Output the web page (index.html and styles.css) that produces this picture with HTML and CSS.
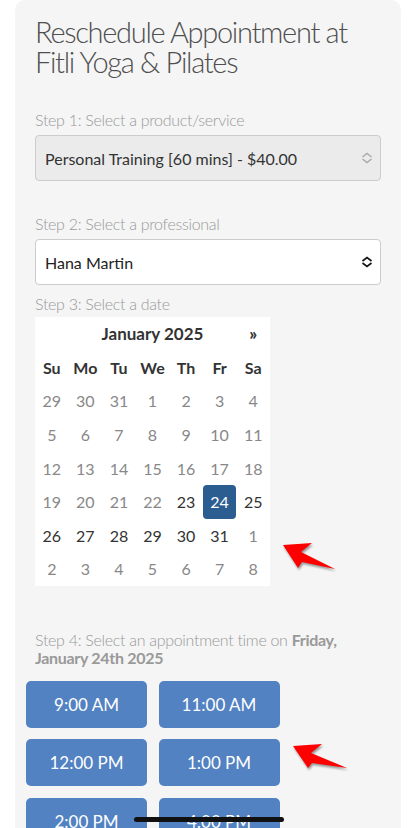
FILE: index.html
```html
<!DOCTYPE html>
<html lang="en">
<head>
    <meta charset="UTF-8">
    <meta name="viewport" content="width=device-width, initial-scale=1.0">
    <title>Reschedule Appointment - Fitli Yoga &amp; Pilates</title>
    <link rel="stylesheet" href="styles.css">
</head>
<body>
    <div class="page">
        <main class="card">
            <h1>Reschedule Appointment at Fitli Yoga &amp; Pilates</h1>

            <section class="step step-service">
                <label for="service">Step 1: Select a product/service</label>
                <div class="select disabled">
                    <span id="service">Personal Training [60 mins] - $40.00</span>
                    <svg class="chevrons" width="12" height="12" viewBox="0 0 12 12"><path d="M1.5 5 L6 1.5 L10.5 5 M1.5 7 L6 10.5 L10.5 7" fill="none" stroke="currentColor" stroke-width="1.4"/></svg>
                </div>
            </section>

            <section class="step step-pro">
                <label for="professional">Step 2: Select a professional</label>
                <div class="select">
                    <span id="professional">Hana Martin</span>
                    <svg class="chevrons" width="12" height="12" viewBox="0 0 12 12"><path d="M1.5 5 L6 1.5 L10.5 5 M1.5 7 L6 10.5 L10.5 7" fill="none" stroke="currentColor" stroke-width="1.6"/></svg>
                </div>
            </section>

            <section class="step">
                <label>Step 3: Select a date</label>
                <div class="calendar">
                    <span></span>
                    <span class="month">January 2025</span>
                    <span class="next">&raquo;</span>

                    <span class="dow">Su</span><span class="dow">Mo</span><span class="dow">Tu</span><span class="dow">We</span><span class="dow">Th</span><span class="dow">Fr</span><span class="dow">Sa</span>

                    <span class="day">29</span><span class="day">30</span><span class="day">31</span><span class="day">1</span><span class="day">2</span><span class="day">3</span><span class="day">4</span>
                    <span class="day">5</span><span class="day">6</span><span class="day">7</span><span class="day">8</span><span class="day">9</span><span class="day">10</span><span class="day">11</span>
                    <span class="day">12</span><span class="day">13</span><span class="day">14</span><span class="day">15</span><span class="day">16</span><span class="day">17</span><span class="day">18</span>
                    <span class="day">19</span><span class="day">20</span><span class="day">21</span><span class="day">22</span><span class="day open">23</span><span class="day selected">24</span><span class="day open">25</span>
                    <span class="day open">26</span><span class="day open">27</span><span class="day open">28</span><span class="day open">29</span><span class="day open">30</span><span class="day open">31</span><span class="day">1</span>
                    <span class="day">2</span><span class="day">3</span><span class="day">4</span><span class="day">5</span><span class="day">6</span><span class="day">7</span><span class="day">8</span>
                </div>
            </section>

            <section class="step step-time">
                <label>Step 4: Select an appointment time on <strong>Friday,</strong> <strong>January 24th 2025</strong></label>
                <div class="times">
                    <button type="button">9:00 AM</button>
                    <button type="button">11:00 AM</button>
                    <button type="button">12:00 PM</button>
                    <button type="button">1:00 PM</button>
                    <button type="button">2:00 PM</button>
                    <button type="button">4:00 PM</button>
                </div>
            </section>
        </main>

        <!-- annotation arrows -->
        <svg class="arrow arrow-date" width="60" height="34" viewBox="0 0 60 34"><polygon points="3,4 32,2 21,11 55,28 22,21 18,27" fill="#ff0000"/></svg>
        <svg class="arrow arrow-time" width="60" height="34" viewBox="0 0 60 34"><polygon points="3,4 32,2 21,11 57,26 22,21 18,26" fill="#ff0000"/></svg>

        <div class="home-bar"></div>
    </div>
</body>
</html>
```

FILE: styles.css
```css
/* Basic Reset */
* {
    margin: 0;
    padding: 0;
    box-sizing: border-box;
}

body {
    font-family: Lato, "Open Sans", Arial, sans-serif;
    background-color: #fff;
    color: #333;
}

.page {
    position: relative;
    height: 100vh;
    overflow: hidden;
    padding: 0 15px;
}

.card {
    background: #f5f5f5;
    border-radius: 10px 10px 0 0;
    min-height: 100%;
    padding: 17px 20px 0;
}

h1 {
    font-weight: 300;
    font-size: 29px;
    line-height: 30px;
    letter-spacing: -1.3px;
    color: #4f4f4f;
    margin-bottom: 33px;
}

label {
    display: block;
    font-size: 16px;
    font-weight: 300;
    letter-spacing: -0.3px;
    color: #999;
    line-height: 20px;
    margin-bottom: 5px;
}

.step {
    margin-bottom: 10px;
}

.step-service {
    margin-bottom: 33px;
}

.step-pro {
    margin-bottom: 9px;
}

.select {
    display: flex;
    justify-content: space-between;
    align-items: center;
    height: 46px;
    padding: 0 7px 0 9px;
    background: #fff;
    border: 1px solid #ccc;
    border-radius: 4px;
    font-size: 16px;
    color: #222;
}

.select.disabled {
    background: #ebebeb;
    color: #333;
}

.select.disabled .chevrons {
    color: #aaa;
}

.chevrons {
    color: #111;
}

/* Calendar */
.calendar {
    display: grid;
    grid-template-columns: repeat(7, 1fr);
    grid-auto-rows: 33.6px;
    width: 235px;
    background: #fff;
    margin-top: -2px;
}

.calendar span {
    display: flex;
    align-items: center;
    justify-content: center;
    font-size: 16px;
}

.calendar .month {
    grid-column: span 5;
    font-weight: 700;
    font-size: 17px;
    color: #333;
}

.calendar .next {
    font-weight: 900;
    font-size: 17px;
    color: #333;
}

.dow {
    font-weight: 700;
    color: #333;
}

.day {
    color: #888;
}

.day.open {
    color: #333;
}

.day.selected {
    background: #2b5d90;
    color: #fff;
    border-radius: 4px;
}

/* Times */
.step-time {
    margin-top: 45px;
}

.step-time label {
    line-height: 18px;
    margin-bottom: 14px;
}

.step-time strong {
    font-weight: 700;
}

.times {
    display: grid;
    grid-template-columns: 121px 121px;
    gap: 11.5px;
    margin-left: -9px;
}

.times button {
    height: 47px;
    background: #5282c2;
    color: #fff;
    border: none;
    border-radius: 5px;
    font-family: inherit;
    font-size: 17px;
    cursor: pointer;
}

/* annotations laid over the screenshot */
.arrow {
    position: absolute;
    filter: drop-shadow(1px 2px 1px rgba(0, 0, 0, 0.4));
}

.arrow-date {
    left: 280px;
    top: 541px;
}

.arrow-time {
    left: 290px;
    top: 742px;
}

.home-bar {
    position: absolute;
    left: 134px;
    bottom: 6px;
    width: 150px;
    height: 5px;
    border-radius: 3px;
    background: #111;
}
```
